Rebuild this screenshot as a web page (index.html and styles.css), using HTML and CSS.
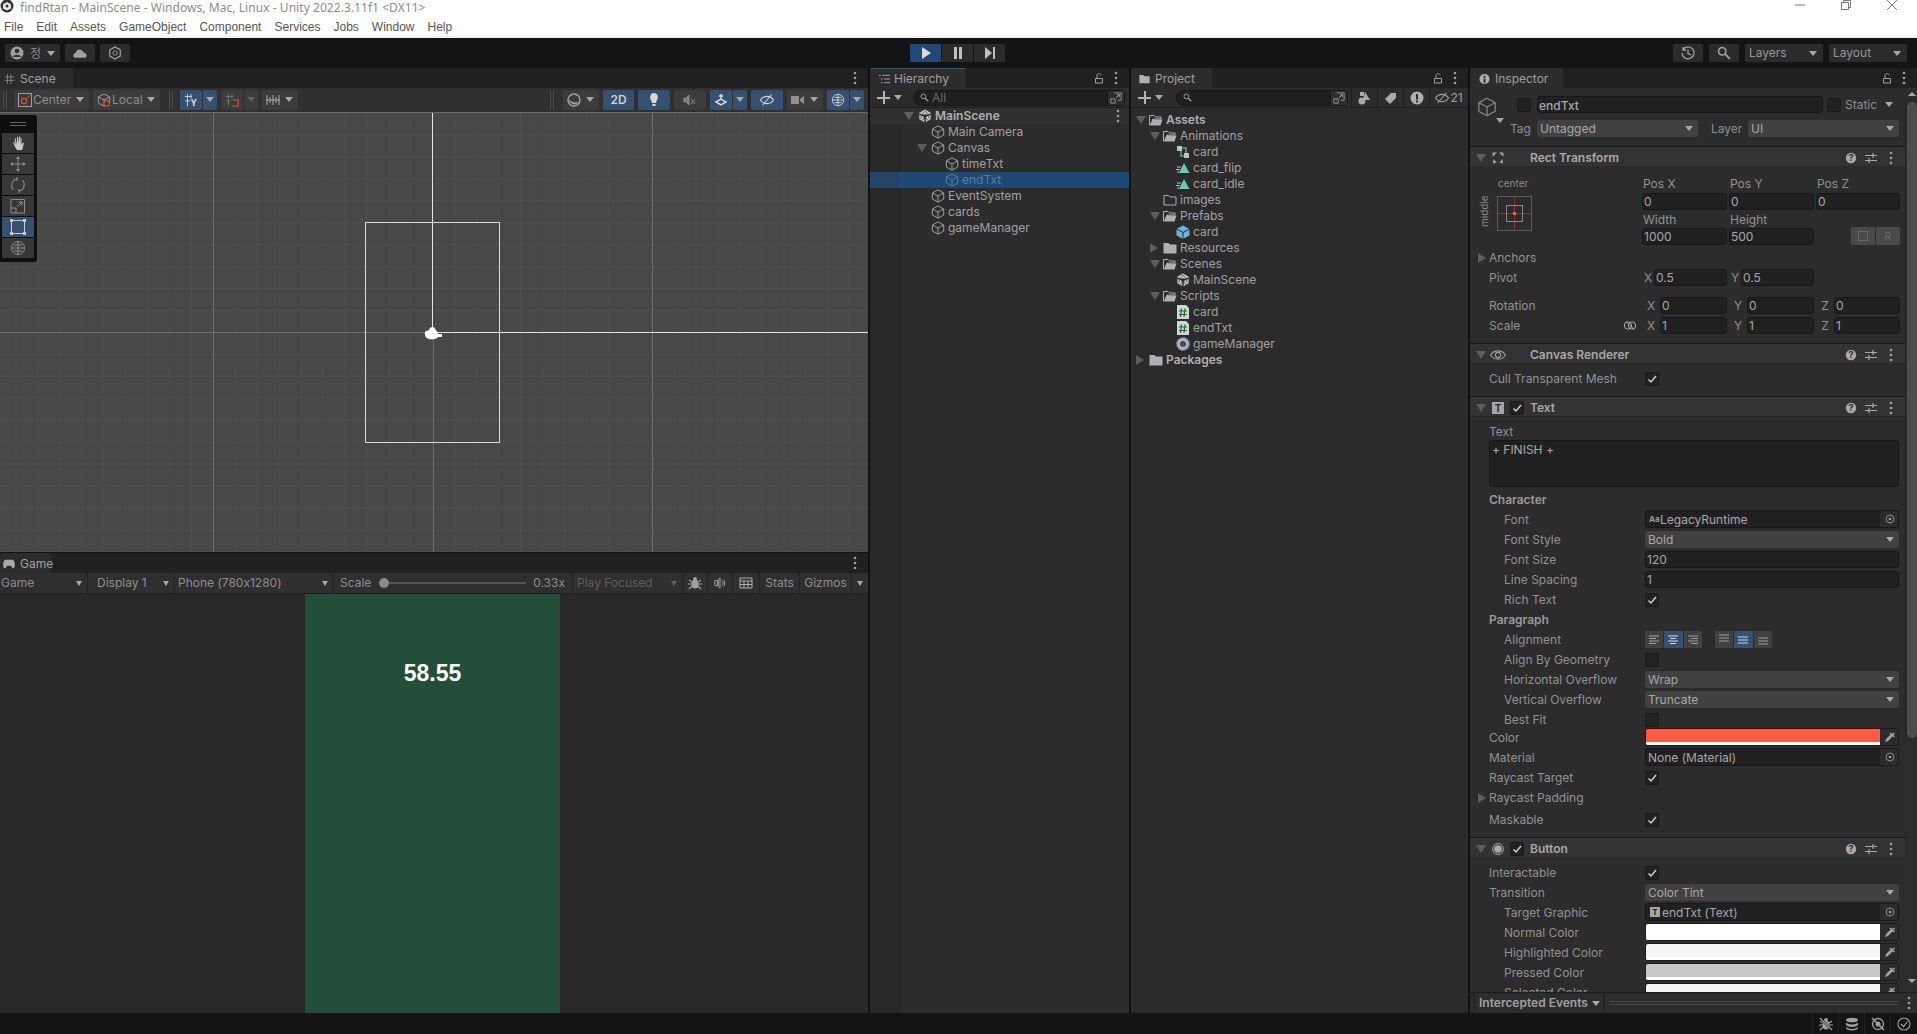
FILE: index.html
```html
<!DOCTYPE html>
<html lang="en">
<head>
<meta charset="utf-8">
<title>findRtan - MainScene - Unity</title>
<link rel="stylesheet" href="styles.css">
</head>
<body>
<svg class="defs" width="0" height="0">
<defs>
<symbol id="cube" viewBox="0 0 16 16"><path d="M8 1 14.5 4.5V11.5L8 15 1.5 11.5V4.5ZM1.5 4.5 8 8 14.5 4.5M8 8V15" fill="none" stroke="currentColor" stroke-width="1.1"/></symbol>
<symbol id="unity" viewBox="0 0 16 16"><path d="M8 .5 14.5 4.200V11.800L8 15.500 1.500 11.800V4.200Z" fill="#c8c8c8"/><path d="M8 8 1.500 6M8 8 14.500 6M8 8 8 15.500" stroke="#2a2a2a" stroke-width="1.700" fill="none"/><path d="M8 2.500 5 5.500M8 2.500 11 5.500M3 11 4.500 7.500M13 11 11.500 7.500M5 13 7 10M11 13 9 10" stroke="#2a2a2a" stroke-width=".8" fill="none"/><circle cx="8" cy="8" r="2" fill="#2a2a2a"/></symbol>
<symbol id="dots" viewBox="0 0 4 14"><circle cx="2" cy="2" r="1.3" fill="currentColor"/><circle cx="2" cy="7" r="1.3" fill="currentColor"/><circle cx="2" cy="12" r="1.3" fill="currentColor"/></symbol>
<symbol id="lock" viewBox="0 0 10 12"><path d="M1.5 6.5H8.5V11H1.5ZM3 6V3.2C3 1.2 7 1.2 7 3.2" fill="none" stroke="currentColor" stroke-width="1"/></symbol>
<symbol id="help" viewBox="0 0 12 12"><circle cx="6" cy="6" r="5.2" fill="currentColor"/><text x="6" y="9.3" text-anchor="middle" font-size="9" font-weight="700" font-family="Inter" fill="#2c2c2c">?</text></symbol>
<symbol id="sliders" viewBox="0 0 12 12"><path d="M0 3.5H12M0 8.5H12M8 1V6M4 6V11" stroke="currentColor" stroke-width="1.2" fill="none"/></symbol>
<symbol id="check" viewBox="0 0 12 12"><path d="M2.5 6.5 5 9 10 3" stroke="#d0d0d0" stroke-width="1.5" fill="none"/></symbol>
<symbol id="pick" viewBox="0 0 12 12"><path d="M1 11 2 8 7 3 9 5 4 10ZM7 1.5 8.5 3 10 1.5 11 2.5 9.5 4 11 5.5 10 6.5 5.5 2.5Z" fill="currentColor"/></symbol>
<symbol id="target" viewBox="0 0 12 12"><circle cx="6" cy="6" r="4.7" fill="none" stroke="currentColor"/><circle cx="6" cy="6" r="1.6" fill="currentColor"/></symbol>
<symbol id="fold-o" viewBox="0 0 14 12"><path d="M.5 1.5H5L6.5 3H12V5H4L1.5 11H.5Z" fill="none" stroke="#b0b0b0"/><path d="M3.5 5.5H13.5L11.5 11.5H1.5Z" fill="#b0b0b0"/></symbol>
<symbol id="fold-c" viewBox="0 0 14 12"><path d="M.5 1H5.5L7 2.5H13.5V11.5H.5Z" fill="#b0b0b0"/></symbol>
<symbol id="fold-e" viewBox="0 0 14 12"><path d="M1 1.5H5.5L7 3H13V11H1Z" fill="none" stroke="#b0b0b0"/></symbol>
<symbol id="ctrl" viewBox="0 0 14 14"><rect x="1" y="1" width="5" height="5" fill="#c0c0c0"/><rect x="8" y="8" width="5" height="5" fill="#c0c0c0"/><path d="M5 6V11H8M6 3H10V8" fill="none" stroke="#5fd0b8" stroke-width="1.2"/></symbol>
<symbol id="clip" viewBox="0 0 14 14"><path d="M8 2 13.5 12H3Z" fill="#5fd0b8"/><path d="M1 6H5M0 8.5H4M1 11H3" stroke="#c0c0c0"/></symbol>
<symbol id="prefab" viewBox="0 0 14 14"><path d="M7 .5 13.5 4V10.5L7 14 .5 10.5V4Z" fill="#6db3dc"/><path d="M.5 4 7 7.5 13.5 4M7 7.5V14" stroke="#2c2c2c" fill="none"/></symbol>
<symbol id="script" viewBox="0 0 14 14"><path d="M1 0H10L13 3V14H1Z" fill="#d4d4d4"/><path d="M5.5 3.5 4.5 12M9 3.5 8 12M3 6H11M3 9.5H11" stroke="#1f6b2d" stroke-width="1.2" fill="none"/></symbol>
<symbol id="gear" viewBox="0 0 14 14"><circle cx="7" cy="7" r="4.600" fill="none" stroke="#a9b4c4" stroke-width="3.600"/><circle cx="7" cy="7" r="6.200" fill="none" stroke="#7c8594" stroke-width="1.500" stroke-dasharray="1.600 1.600"/><circle cx="7" cy="7" r="2" fill="#4a5260"/></symbol>
<symbol id="rect" viewBox="0 0 14 14"><path d="M1 1 5 1 1 5ZM13 1 9 1 13 5ZM2 9 5 12 1.500 13ZM12 9 9 12 12.500 13Z" fill="currentColor" stroke="currentColor" stroke-width=".8"/></symbol>
<symbol id="eye" viewBox="0 0 16 12"><path d="M.5 6C4 .5 12 .5 15.5 6 12 11.500 4 11.500 .5 6Z" fill="none" stroke="currentColor" stroke-width="1.1"/><circle cx="8" cy="6" r="2.6" fill="none" stroke="currentColor" stroke-width="1.1"/></symbol>
<symbol id="eyeoff" viewBox="0 0 16 14"><path d="M.5 7C4 1.500 12 1.500 15.500 7 12 12.500 4 12.500 .5 7ZM3 13 13 1" fill="none" stroke="currentColor" stroke-width="1.2"/></symbol>
<symbol id="pop" viewBox="0 0 14 14"><path d="M4.500 1H13V9.500H9M1 8H6V13H1ZM7 7 11 3M8 3H11V6" fill="none" stroke="currentColor"/></symbol>
<symbol id="mag" viewBox="0 0 12 12"><circle cx="4.500" cy="4.500" r="3.200" fill="none" stroke="currentColor" stroke-width="1.300"/><path d="M7 7 11 11" stroke="currentColor" stroke-width="1.600"/></symbol>
<symbol id="bug" viewBox="0 0 14 14"><ellipse cx="7" cy="8" rx="3.500" ry="4.500" fill="currentColor"/><circle cx="7" cy="3" r="2" fill="currentColor"/><path d="M1 4 4 6M13 4 10 6M0 8H4M14 8H10M1 13 4 10M13 13 10 10" stroke="currentColor" stroke-width="1.200"/></symbol>
<symbol id="bugoff" viewBox="0 0 14 14"><use href="#bug" width="14" height="14"/><path d="M1 1 13 13" stroke="#141414" stroke-width="2.400"/><path d="M1 1 13 13" stroke="currentColor" stroke-width="1.200"/></symbol>
<symbol id="db" viewBox="0 0 14 14"><ellipse cx="7" cy="3" rx="6" ry="2.300" fill="currentColor"/><path d="M1 5.500C3 8 11 8 13 5.500V8C11 10.500 3 10.500 1 8ZM1 10C3 12.500 11 12.500 13 10V11.500C11 14 3 14 1 11.500Z" fill="currentColor"/></symbol>
<symbol id="tgtoff" viewBox="0 0 14 14"><circle cx="7" cy="7" r="5.500" fill="none" stroke="currentColor" stroke-width="1.300"/><circle cx="7" cy="7" r="2.500" fill="currentColor"/><path d="M1 1 13 13" stroke="currentColor" stroke-width="1.600"/></symbol>
<symbol id="okc" viewBox="0 0 14 14"><circle cx="7" cy="7" r="6" fill="none" stroke="currentColor" stroke-width="1.100"/><path d="M4 7 6.500 9.500 10.500 4.500" fill="none" stroke="currentColor" stroke-width="1.200"/></symbol>
<symbol id="hand" viewBox="0 0 16 16"><path d="M3 7 5 12 7 15H12L14 8 12.500 8 11.500 10V3L10.500 3 10 9V1.500H9L8.500 9 8 1.500 7 2 7 9.500 5.500 3 4.700 3.500 5.500 10 4 7Z" fill="currentColor"/></symbol>
<symbol id="move" viewBox="0 0 16 16"><path d="M8 3V13M3 8H13" stroke="currentColor"/><path d="M8 0 10 3H6ZM8 16 6 13H10ZM0 8 3 6V10ZM16 8 13 10V6Z" fill="currentColor"/></symbol>
<symbol id="rot" viewBox="0 0 16 16"><path d="M3.500 13C0 9 2 3 7 2M12.500 3C16 7 14 13 9 14M7 0V4M9 12V16" fill="none" stroke="currentColor" stroke-width="1.100"/></symbol>
<symbol id="scale" viewBox="0 0 16 16"><path d="M1 1.500H14.500V15H1ZM1 10H6V15M7.500 8.500 12 4M8.500 4H12V7.500" fill="none" stroke="currentColor"/></symbol>
<symbol id="rt" viewBox="0 0 16 16"><path d="M3 1.500H13M3 14.500H13M1.500 3V13M14.500 3V13" stroke="currentColor" fill="none"/><path d="M0 0H3V3H0ZM13 0H16V3H13ZM0 13H3V16H0ZM13 13H16V16H13Z" fill="currentColor"/></symbol>
<symbol id="xf" viewBox="0 0 16 16"><circle cx="8" cy="8" r="6.500" fill="none" stroke="currentColor"/><path d="M8 2V14M2 8H14M4 5H12M4 11H12" stroke="currentColor" fill="none"/></symbol>
<symbol id="ac" viewBox="0 0 14 14"><circle cx="7" cy="7" r="6.500" fill="currentColor"/><circle cx="7" cy="5" r="2.300" fill="#2e2e2e"/><path d="M2.800 11C4 8 10 8 11.200 11" fill="#2e2e2e"/></symbol>
<symbol id="cloud" viewBox="0 0 16 12"><path d="M3 11.500C-.5 11.500 -.5 6 3 6 3.500 1 11 .5 12 5.500 16.500 5.500 16.500 11.500 13 11.500Z" fill="currentColor"/></symbol>
<symbol id="hex" viewBox="0 0 14 16"><path d="M7 1 13 4.500V11.500L7 15 1 11.500V4.500Z" fill="none" stroke="currentColor" stroke-width="1.400"/><circle cx="7" cy="8" r="2.500" fill="none" stroke="currentColor"/></symbol>
<symbol id="hist" viewBox="0 0 14 14"><path d="M2 3.500A6 6 0 1 1 1 7M2 1V4H5M7 3.500V7.500L10 9" fill="none" stroke="currentColor" stroke-width="1.300"/></symbol>
<symbol id="grid" viewBox="0 0 16 16"><path d="M5 1V15M10 1V15M1 5H15M1 10H15" stroke="currentColor" fill="none"/></symbol>
<symbol id="lines3" viewBox="0 0 12 12"><path d="M1 3H11M1 6H11M1 9H11" stroke="currentColor" stroke-width="1"/></symbol>
</defs>
</svg>

<header class="titlebar">
  <div class="title-row">
    <svg class="app-logo" viewBox="0 0 14 14"><circle cx="7" cy="6" r="6.500" fill="#333"/><path d="M7 2 11 4.200V8.500L7 10.500 3 8.500V4.200Z" fill="#e8e8e8"/><circle cx="7" cy="6" r="1.500" fill="#333"/></svg>
    <span class="app-title">findRtan - MainScene - Windows, Mac, Linux - Unity 2022.3.11f1 &lt;DX11&gt;</span>
    <span class="winctl">
      <svg class="win-ic" viewBox="0 0 10 10"><path d="M0 5H10" stroke="#777"/></svg>
      <svg class="win-ic" viewBox="0 0 10 10"><path d="M.5 2.500H7.500V9.500H.5ZM2.500 2.500V.5H9.500V7.500H7.500" fill="none" stroke="#777"/></svg>
      <svg class="win-ic" viewBox="0 0 10 10"><path d="M0 0 10 10M10 0 0 10" stroke="#777"/></svg>
    </span>
  </div>
  <nav class="menu"><span>File</span><span>Edit</span><span>Assets</span><span>GameObject</span><span>Component</span><span>Services</span><span>Jobs</span><span>Window</span><span>Help</span></nav>
</header>

<div class="toolbar">
  <div class="tb-left">
    <span class="tbtn acc"><svg class="ic14"><use href="#ac"/></svg><span class="kr">정</span><i class="ad"></i></span>
    <span class="tbtn w30"><svg class="ic14"><use href="#cloud"/></svg></span>
    <span class="tbtn w30"><svg class="ic14"><use href="#hex"/></svg></span>
  </div>
  <div class="tb-play">
    <span class="pbtn on"><svg class="ic10" viewBox="0 0 10 12"><path d="M1 0 10 6 1 12Z" fill="#d8d8d8"/></svg></span>
    <span class="pbtn"><svg class="ic10" viewBox="0 0 10 12"><path d="M1 0H4V12H1ZM6 0H9V12H6Z" fill="#c0c0c0"/></svg></span>
    <span class="pbtn"><svg class="ic10" viewBox="0 0 10 12"><path d="M0 0 7 6 0 12ZM8 0H10V12H8Z" fill="#c0c0c0"/></svg></span>
  </div>
  <div class="tb-right">
    <span class="tbtn w30"><svg class="ic14"><use href="#hist"/></svg></span>
    <span class="tbtn w30"><svg class="ic14"><use href="#mag"/></svg></span>
    <span class="tbtn w78"><span>Layers</span><i class="ad"></i></span>
    <span class="tbtn w78"><span>Layout</span><i class="ad"></i></span>
  </div>
</div>

<main class="main">
  <!-- Scene + Game -->
  <section class="col-left">
    <div class="pane-scene">
      <div class="tabbar"><span class="tab tab-scene"><svg class="ic10 tabic"><use href="#grid"/></svg>Scene</span><svg class="tdots"><use href="#dots"/></svg></div>
      <div class="scene-tools">
        <span class="grip"></span>
        <span class="stb w75"><svg class="ic14" viewBox="0 0 14 14"><rect x=".5" y=".5" width="13" height="13" fill="none" stroke="#a0a0a0"/><circle cx="6" cy="8" r="2.700" fill="none" stroke="#d0532c" stroke-width="1.300"/><path d="M8 6 12 2" stroke="#d0532c"/></svg>Center<i class="ad"></i></span>
        <span class="stb w67"><svg class="ic14" viewBox="0 0 16 16"><use href="#cube" width="16" height="16"/><circle cx="11" cy="12" r="3" fill="#333" stroke="#d0532c" stroke-width="1.300"/></svg>Local<i class="ad"></i></span>
        <span class="grip g2"></span>
        <span class="stb blue w22"><svg class="ic14" viewBox="0 0 16 16"><path d="M1 4H9M1 9H7M4 1V15M8 1V6" stroke="#d8d8d8" fill="none"/><text x="11" y="15" text-anchor="middle" font-size="10" font-weight="700" font-family="Inter" fill="#e0e0e0">Y</text></svg></span><span class="stb blue w14 join"><i class="ad"></i></span>
        <span class="stb w22"><svg class="ic14" viewBox="0 0 16 16"><path d="M1 4H9M1 9H6M4 1V15M8 1V6" stroke="#777" fill="none"/><path d="M9 8H15V11A3 3 0 0 1 9 14" fill="none" stroke="#b5502a" stroke-width="1.800"/></svg></span><span class="stb w14 join"><i class="ad dimad"></i></span>
        <span class="stb w36"><svg class="ic14"><path d="M1 2V12M4 4V10M7 2V12M10 4V10M13 2V12M0 7H14" stroke="#aaa" fill="none"/></svg><i class="ad"></i></span>
        <span class="spacer"></span>
        <span class="grip g3"></span>
        <span class="stb w36"><svg class="ic14"><circle cx="7" cy="7" r="6" fill="none" stroke="#a0a0a0" stroke-width="1.500"/><path d="M1.500 6C3 12 9 13 12.500 9 8 10 4 9 1.500 6Z" fill="#a0a0a0"/></svg><i class="ad"></i></span>
        <span class="stb blue w31 ctr strong">2D</span>
        <span class="stb blue w32 ctr"><svg class="ic14" viewBox="0 0 14 14"><path d="M7 0C11 0 12 5 9.500 8L9 10H5L4.500 8C2 5 3 0 7 0ZM5.500 11H8.500V13H5.500Z" fill="#d8d8d8"/></svg></span>
        <span class="stb w32 ctr"><svg class="ic14 dim" viewBox="0 0 14 14"><path d="M1 5H3V9H1ZM4 4 6 2V12L4 10ZM8 6 12 11M12 6 8 11" stroke="#888" fill="#888"/></svg></span>
        <span class="stb blue w22"><svg class="ic14"><path d="M2 9 7 6 12 9 7 12ZM7 1V6M5 3H9" stroke="#d8d8d8" fill="none" stroke-width="1.500"/></svg></span><span class="stb blue w14 join"><i class="ad"></i></span>
        <span class="stb blue w32 ctr"><svg class="ic14"><use href="#eyeoff"/></svg></span>
        <span class="stb w36"><svg class="ic14" viewBox="0 0 14 14"><path d="M0 3H8V11H0ZM9 6 13 3V11L9 8Z" fill="#909090"/></svg><i class="ad"></i></span>
        <span class="stb blue w22"><svg class="ic14"><use href="#xf"/></svg></span><span class="stb blue w14 join"><i class="ad"></i></span>
      </div>
      <div class="scene-view">
        <div class="mark v-a"></div><div class="mark v-b"></div><div class="mark v-c"></div>
        <div class="mark h-a"></div>
        <div class="wline v-w"></div><div class="wline h-w"></div>
        <div class="canvas-rect"></div>
        <svg class="cam" viewBox="0 0 18 14"><path d="M1 8C0 5.500 3 4 5 4.500 5.500 0 11.500 0 11.500 4 13 5 13.500 6 14 8H18V11H14C13 13.500 5 14 4 12.500 2 12.500 1 10 1 8Z" fill="#fff"/></svg>
        <div class="palette">
          <div class="pal-head"><span></span></div>
          <span class="pal-b"><svg class="ic16 br"><use href="#hand"/></svg></span>
          <span class="pal-b"><svg class="ic16"><use href="#move"/></svg></span>
          <span class="pal-b"><svg class="ic16"><use href="#rot"/></svg></span>
          <span class="pal-b"><svg class="ic16"><use href="#scale"/></svg></span>
          <span class="pal-b on"><svg class="ic16 br"><use href="#rt"/></svg></span>
          <span class="pal-b"><svg class="ic16"><use href="#xf"/></svg></span>
        </div>
      </div>
    </div>
    <div class="pane-game">
      <div class="tabbar"><span class="tab tab-game"><svg class="ic12 tabic" viewBox="0 0 14 10"><path d="M3 0H11C14 0 15 9 12 10 10 10 10 7 9 7H5C4 7 4 10 2 10-1 9 0 0 3 0Z" fill="#aaa"/></svg>Game</span><svg class="tdots"><use href="#dots"/></svg></div>
      <div class="game-tools">
        <span class="gt s88">Game<i class="ad sm"></i></span>
        <span class="gt s85 pl">Display 1<i class="ad sm"></i></span>
        <span class="gt s161">Phone (780x1280)<i class="ad sm"></i></span>
        <span class="gt s239 sc">Scale<span class="slider"><i></i></span><span>0.33x</span></span>
        <span class="gt s110 off">Play Focused<i class="ad sm dimad"></i></span>
        <span class="gt s25 ctr"><svg class="ic14"><use href="#bug"/></svg></span>
        <span class="gt s25 ctr"><svg class="ic12" viewBox="0 0 14 14"><path d="M1 4H4V10H1ZM5 3 7 1V13L5 11ZM9 4C11 5 11 9 9 10M11 3C13 5 13 9 11 11" stroke="#b0b0b0" fill="none"/></svg></span>
        <span class="gt s27 ctr"><svg class="ic14" viewBox="0 0 14 14"><path d="M1 2H13V12H1ZM1 5H13M1 8.500H13M5 5V12M9 5V12" fill="none" stroke="#b0b0b0"/></svg></span>
        <span class="gt s40 ctr">Stats</span>
        <span class="gt s52 ctr">Gizmos</span>
        <span class="gt s16 ctr"><i class="ad sm"></i></span>
      </div>
      <div class="game-view"><div class="phone"><span class="timer">58.55</span></div></div>
    </div>
  </section>

  <!-- Hierarchy -->
  <section class="col-hier">
    <div class="tabbar"><span class="tab tab-hier"><svg class="ic12 tabic" viewBox="0 0 12 12"><path d="M0 2H2M3.500 2H12M2 6H4M5.500 6H12M2 10H4M5.500 10H12" stroke="#a8a8a8"/></svg>Hierarchy</span><svg class="tlock"><use href="#lock"/></svg><svg class="tdots"><use href="#dots"/></svg></div>
    <div class="pane-tools">
      <span class="plus"></span><i class="ad"></i>
      <span class="search s-hier"><svg class="ic10"><use href="#mag"/></svg><span class="all">All</span><span class="pop"><svg class="ic12"><use href="#pop"/></svg></span></span>
    </div>
    <div class="tree hier">
      <div class="node l0 head"><i class="ar"></i><svg class="ic14 nic"><use href="#unity"/></svg><b>MainScene</b><svg class="tdots rowdots"><use href="#dots"/></svg></div>
      <div class="node l1"><i class="ar none"></i><svg class="ic14 nic"><use href="#cube"/></svg>Main Camera</div>
      <div class="node l1"><i class="ar"></i><svg class="ic14 nic"><use href="#cube"/></svg>Canvas</div>
      <div class="node l2"><i class="ar none"></i><svg class="ic14 nic"><use href="#cube"/></svg>timeTxt</div>
      <div class="node l2 sel"><i class="ar none"></i><svg class="ic14 nic"><use href="#cube"/></svg>endTxt</div>
      <div class="node l1"><i class="ar none"></i><svg class="ic14 nic"><use href="#cube"/></svg>EventSystem</div>
      <div class="node l1"><i class="ar none"></i><svg class="ic14 nic"><use href="#cube"/></svg>cards</div>
      <div class="node l1"><i class="ar none"></i><svg class="ic14 nic"><use href="#cube"/></svg>gameManager</div>
    </div>
  </section>

  <!-- Project -->
  <section class="col-proj">
    <div class="tabbar"><span class="tab tab-proj"><svg class="ic12 tabic"><use href="#fold-c"/></svg>Project</span><svg class="tlock"><use href="#lock"/></svg><svg class="tdots"><use href="#dots"/></svg></div>
    <div class="pane-tools proj-tools">
      <span class="plus"></span><i class="ad"></i>
      <span class="search s-proj"><svg class="ic10"><use href="#mag"/></svg><span class="pop"><svg class="ic12"><use href="#pop"/></svg></span></span>
      <span class="pt-b"><svg class="ic14" viewBox="0 0 14 14"><circle cx="4" cy="10" r="3.500" fill="#aaa"/><path d="M7 1 12 9H5Z M2 1H6V5H2Z" fill="#aaa"/></svg></span>
      <span class="pt-b"><svg class="ic12" viewBox="0 0 12 12"><path d="M6 1H11V6L5 12 0 7Z" fill="#aaa"/></svg></span>
      <span class="pt-b"><svg class="ic14" viewBox="0 0 14 14"><circle cx="7" cy="7" r="6.500" fill="#b0b0b0"/><path d="M6 3H8V8.500H6ZM6 9.500H8V11.500H6Z" fill="#2c2c2c"/></svg></span>
      <span class="pt-b last"><svg class="ic14"><use href="#eyeoff"/></svg>21</span>
    </div>
    <div class="tree proj">
      <div class="node l0"><i class="ar"></i><svg class="ic14 nic"><use href="#fold-o"/></svg><b>Assets</b></div>
      <div class="node l1"><i class="ar"></i><svg class="ic14 nic"><use href="#fold-o"/></svg>Animations</div>
      <div class="node l2"><i class="ar none"></i><svg class="ic14 nic"><use href="#ctrl"/></svg>card</div>
      <div class="node l2"><i class="ar none"></i><svg class="ic14 nic"><use href="#clip"/></svg>card_flip</div>
      <div class="node l2"><i class="ar none"></i><svg class="ic14 nic"><use href="#clip"/></svg>card_idle</div>
      <div class="node l1"><i class="ar none"></i><svg class="ic14 nic"><use href="#fold-e"/></svg>images</div>
      <div class="node l1"><i class="ar"></i><svg class="ic14 nic"><use href="#fold-o"/></svg>Prefabs</div>
      <div class="node l2"><i class="ar none"></i><svg class="ic14 nic"><use href="#prefab"/></svg>card</div>
      <div class="node l1"><i class="ar r"></i><svg class="ic14 nic"><use href="#fold-c"/></svg>Resources</div>
      <div class="node l1"><i class="ar"></i><svg class="ic14 nic"><use href="#fold-o"/></svg>Scenes</div>
      <div class="node l2"><i class="ar none"></i><svg class="ic14 nic"><use href="#unity"/></svg>MainScene</div>
      <div class="node l1"><i class="ar"></i><svg class="ic14 nic"><use href="#fold-o"/></svg>Scripts</div>
      <div class="node l2"><i class="ar none"></i><svg class="ic14 nic"><use href="#script"/></svg>card</div>
      <div class="node l2"><i class="ar none"></i><svg class="ic14 nic"><use href="#script"/></svg>endTxt</div>
      <div class="node l2"><i class="ar none"></i><svg class="ic14 nic"><use href="#gear"/></svg>gameManager</div>
      <div class="node l0"><i class="ar r"></i><svg class="ic14 nic"><use href="#fold-c"/></svg><b>Packages</b></div>
    </div>
  </section>

  <!-- Inspector -->
  <section class="col-insp">
    <div class="tabbar"><span class="tab tab-insp"><svg class="ic10 tabic" viewBox="0 0 12 12"><circle cx="6" cy="6" r="5.500" fill="#b0b0b0"/><path d="M5 2.500H7V4.500H5ZM5 5.500H7V10H5Z" fill="#222"/></svg>Inspector</span><svg class="tlock"><use href="#lock"/></svg><svg class="tdots"><use href="#dots"/></svg></div>
    <div class="insp-scroll">
      <div class="insp-body">
        <div class="obj-head">
          <svg class="obj-cube"><use href="#cube"/></svg><i class="ad obj-ad"></i>
          <div class="obj-rows">
            <div class="obj-r1"><span class="cb"></span><span class="fld name">endTxt</span><span class="cb"></span><span class="static">Static</span><i class="ad"></i></div>
            <div class="obj-r2"><span class="tl">Tag</span><span class="dd dd-tag">Untagged<i class="ad"></i></span><span class="tl tl2">Layer</span><span class="dd dd-layer">UI<i class="ad"></i></span></div>
          </div>
        </div>

        <div class="comp">
          <div class="chead"><i class="ar"></i><svg class="ic12 cic"><use href="#rect"/></svg><span class="cnb"></span><b>Rect Transform</b><svg class="ic12 hic"><use href="#help"/></svg><svg class="ic12 hic"><use href="#sliders"/></svg><svg class="tdots hd"><use href="#dots"/></svg></div>
          <div class="rt-body">
            <div class="rt-top">
              <div class="anchor">
                <span class="a-center">center</span>
                <span class="a-middle">middle</span>
                <div class="a-box"><i class="a-h"></i><i class="a-v"></i><i class="a-in"></i><i class="a-dot"></i></div>
              </div>
              <div class="rt-grid">
                <span>Pos X</span><span>Pos Y</span><span>Pos Z</span>
                <span class="fld">0</span><span class="fld">0</span><span class="fld">0</span>
                <span>Width</span><span>Height</span><span></span>
                <span class="fld">1000</span><span class="fld">500</span>
                <span class="rbtns"><span class="rb"><i class="dash"></i></span><span class="rb">R</span></span>
              </div>
            </div>
            <div class="row foldrow"><i class="ar r"></i><span class="lbl">Anchors</span></div>
            <div class="row rtr"><span class="lbl rtl">Pivot</span><div class="tri">
              <span class="ax pv"><em>X</em><span class="fld">0.5</span></span><span class="ax pv"><em>Y</em><span class="fld">0.5</span></span><span></span></div></div>
            <div class="row rtr rot"><span class="lbl rtl">Rotation</span><div class="tri">
              <span class="ax"><em>X</em><span class="fld">0</span></span><span class="ax"><em>Y</em><span class="fld">0</span></span><span class="ax"><em>Z</em><span class="fld">0</span></span></div></div>
            <div class="row rtr"><span class="lbl rtl lk">Scale<svg class="ic12 link" viewBox="0 0 12 8"><rect x=".5" y=".5" width="7" height="7" rx="3" fill="none" stroke="#aaa"/><rect x="4.500" y=".5" width="7" height="7" rx="3" fill="none" stroke="#aaa"/><path d="M2 0 10 8" stroke="#aaa"/></svg></span><div class="tri">
              <span class="ax"><em>X</em><span class="fld">1</span></span><span class="ax"><em>Y</em><span class="fld">1</span></span><span class="ax"><em>Z</em><span class="fld">1</span></span></div></div>
          </div>
        </div>

        <div class="comp">
          <div class="chead"><i class="ar"></i><svg class="ic16 cic eye"><use href="#eye"/></svg><span class="cnb"></span><b>Canvas Renderer</b><svg class="ic12 hic"><use href="#help"/></svg><svg class="ic12 hic"><use href="#sliders"/></svg><svg class="tdots hd"><use href="#dots"/></svg></div>
          <div class="cbody"><div class="row"><span class="lbl">Cull Transparent Mesh</span><span class="cb"><svg><use href="#check"/></svg></span></div></div>
        </div>

        <div class="comp">
          <div class="chead"><i class="ar"></i><span class="cic t-ic">T</span><span class="cb hcb"><svg><use href="#check"/></svg></span><b>Text</b><svg class="ic12 hic"><use href="#help"/></svg><svg class="ic12 hic"><use href="#sliders"/></svg><svg class="tdots hd"><use href="#dots"/></svg></div>
          <div class="cbody tbody">
            <div class="tlabel">Text</div>
            <div class="tarea">+ FINISH +</div>
            <div class="row group"><b>Character</b></div>
            <div class="row"><span class="lbl ind">Font</span><span class="obj"><span class="aa">Aa</span>LegacyRuntime<span class="obt"><svg class="ic10"><use href="#target"/></svg></span></span></div>
            <div class="row"><span class="lbl ind">Font Style</span><span class="dd">Bold<i class="ad"></i></span></div>
            <div class="row"><span class="lbl ind">Font Size</span><span class="fld">120</span></div>
            <div class="row"><span class="lbl ind">Line Spacing</span><span class="fld">1</span></div>
            <div class="row"><span class="lbl ind">Rich Text</span><span class="cb"><svg><use href="#check"/></svg></span></div>
            <div class="row group"><b>Paragraph</b></div>
            <div class="row"><span class="lbl ind">Alignment</span>
              <span class="seg"><span><svg class="ic12" viewBox="0 0 12 12"><path d="M1 2H11M1 4.500H8M1 7H11M1 9.500H8" stroke="currentColor"/></svg></span><span class="on"><svg class="ic12" viewBox="0 0 12 12"><path d="M1 2H11M3 4.500H9M1 7H11M3 9.500H9" stroke="currentColor"/></svg></span><span><svg class="ic12" viewBox="0 0 12 12"><path d="M1 2H11M4 4.500H11M1 7H11M4 9.500H11" stroke="currentColor"/></svg></span></span>
              <span class="seg seg2"><span class="up"><svg class="ic12"><use href="#lines3"/></svg></span><span class="on"><svg class="ic12"><use href="#lines3"/></svg></span><span class="down"><svg class="ic12"><use href="#lines3"/></svg></span></span>
            </div>
            <div class="row"><span class="lbl ind">Align By Geometry</span><span class="cb"></span></div>
            <div class="row"><span class="lbl ind">Horizontal Overflow</span><span class="dd">Wrap<i class="ad"></i></span></div>
            <div class="row"><span class="lbl ind">Vertical Overflow</span><span class="dd">Truncate<i class="ad"></i></span></div>
            <div class="row short"><span class="lbl ind">Best Fit</span><span class="cb"></span></div>
            <div class="row"><span class="lbl">Color</span><span class="color"><span class="sw c-red"></span><span class="obt"><svg class="ic12"><use href="#pick"/></svg></span></span></div>
            <div class="row"><span class="lbl">Material</span><span class="obj">None (Material)<span class="obt"><svg class="ic10"><use href="#target"/></svg></span></span></div>
            <div class="row"><span class="lbl">Raycast Target</span><span class="cb"><svg><use href="#check"/></svg></span></div>
            <div class="row foldrow"><i class="ar r"></i><span class="lbl">Raycast Padding</span></div>
            <div class="row mask"><span class="lbl">Maskable</span><span class="cb"><svg><use href="#check"/></svg></span></div>
          </div>
        </div>

        <div class="comp">
          <div class="chead"><i class="ar"></i><svg class="ic12 cic radio" viewBox="0 0 12 12"><circle cx="6" cy="6" r="5.400" fill="none" stroke="#aaa"/><circle cx="6" cy="6" r="3.800" fill="#aaa"/></svg><span class="cb hcb"><svg><use href="#check"/></svg></span><b>Button</b><svg class="ic12 hic"><use href="#help"/></svg><svg class="ic12 hic"><use href="#sliders"/></svg><svg class="tdots hd"><use href="#dots"/></svg></div>
          <div class="cbody">
            <div class="row"><span class="lbl">Interactable</span><span class="cb"><svg><use href="#check"/></svg></span></div>
            <div class="row"><span class="lbl">Transition</span><span class="dd">Color Tint<i class="ad"></i></span></div>
            <div class="row"><span class="lbl ind">Target Graphic</span><span class="obj"><span class="tmini">T</span>endTxt (Text)<span class="obt"><svg class="ic10"><use href="#target"/></svg></span></span></div>
            <div class="row"><span class="lbl ind">Normal Color</span><span class="color"><span class="sw c-white"></span><span class="obt"><svg class="ic12"><use href="#pick"/></svg></span></span></div>
            <div class="row"><span class="lbl ind">Highlighted Color</span><span class="color"><span class="sw c-hi"></span><span class="obt"><svg class="ic12"><use href="#pick"/></svg></span></span></div>
            <div class="row"><span class="lbl ind">Pressed Color</span><span class="color"><span class="sw c-pr"></span><span class="obt"><svg class="ic12"><use href="#pick"/></svg></span></span></div>
            <div class="row"><span class="lbl ind">Selected Color</span><span class="color"><span class="sw c-hi"></span><span class="obt"><svg class="ic12"><use href="#pick"/></svg></span></span></div>
          </div>
        </div>
      </div>
      <div class="vscroll"><i class="sb-up"></i><span class="thumb"></span><i class="sb-down"></i></div>
    </div>
    <div class="events"><span class="ev-name">Intercepted Events<i class="ad"></i></span><span class="ev-lines"></span><svg class="tdots"><use href="#dots"/></svg></div>
  </section>
</main>

<footer class="status">
  <span><svg class="ic14"><use href="#bugoff"/></svg></span>
  <span><svg class="ic14"><use href="#db"/></svg></span>
  <span><svg class="ic14"><use href="#tgtoff"/></svg></span>
  <span><svg class="ic14"><use href="#okc"/></svg></span>
</footer>
</body>
</html>
```
FILE: styles.css
```css
* { box-sizing: border-box; }
html, body { margin: 0; padding: 0; }
body { width: 1917px; height: 1034px; overflow: hidden; display: flex; flex-direction: column; background: #101010; font: 12px/16px Inter, "Noto Sans CJK KR", sans-serif; font-feature-settings: "calt" 0; color: #a6a6a6; }
svg { display: block; flex: none; }
.defs { position: absolute; }
i { display: block; font-style: normal; }
em { font-style: normal; }
b { font-weight: 600; }

/* window chrome */
.titlebar { height: 38px; flex: none; background: #fff; border-bottom: 2px solid #f0f0f0; font-family: "Noto Sans", sans-serif; color: #8a8a8a; }
.title-row { height: 19px; display: flex; align-items: flex-start; }
.app-logo { width: 14px; height: 14px; margin-left: 0; }
.app-title { margin-left: 6px; line-height: 15px; font-size: 12px; letter-spacing: .05px; color: #8c8c8c; white-space: nowrap; }
.winctl { margin-left: auto; display: flex; gap: 36px; padding-right: 20px; overflow: hidden; height: 10px; }
.win-ic { width: 10px; height: 10px; }
.menu { height: 17px; display: flex; gap: 13px; padding-left: 4px; color: #555; font: 12px/17px "Liberation Sans", sans-serif; }

/* top toolbar */
.toolbar { height: 30px; flex: none; background: #141414; display: flex; align-items: center; padding: 0 10px 0 5px; }
.tb-left { width: 905px; display: flex; gap: 5px; }
.tb-play { display: flex; gap: 1px; }
.tb-right { margin-left: auto; display: flex; gap: 6px; }
.tbtn { height: 18px; background: #2b2b2b; border-radius: 2px; display: flex; align-items: center; justify-content: center; color: #a0a0a0; }
.tbtn.acc { width: 55px; gap: 6px; }
.kr { font-family: "Noto Sans CJK KR", sans-serif; color: #8a8a8a; }
.w30 { width: 30px; }
.w78 { width: 78px; justify-content: space-between; padding: 0 6px 0 4px; color: #969696; }
.pbtn { width: 31px; height: 18px; background: #2b2b2b; display: flex; align-items: center; justify-content: center; }
.pbtn.on { background: #1e4a73; }
.ic10 { width: 10px; height: 12px; color: #a0a0a0; }
.ic12 { width: 12px; height: 12px; color: #a0a0a0; }
.ic14 { width: 14px; height: 14px; color: #a0a0a0; }
.ic16 { width: 16px; height: 16px; color: #8e8e8e; }
.ad { width: 0; height: 0; border-left: 4px solid transparent; border-right: 4px solid transparent; border-top: 5px solid #a8a8a8; flex: none; }
.ad.sm { border-left-width: 3px; border-right-width: 3px; }
.ad.dimad { border-top-color: #606060; }

/* panes */
.main { flex: 1; min-height: 0; display: flex; gap: 2px; background: #111; }
.col-left { width: 868px; display: flex; flex-direction: column; }
.col-hier { width: 259px; background: #2b2b2b; }
.col-proj { width: 337px; background: #2b2b2b; }
.col-insp { width: 447px; background: #2c2c2c; display: flex; flex-direction: column; }
.tabbar { height: 20px; flex: none; background: #202020; display: flex; align-items: center; justify-content: flex-start; }
.tab { height: 20px; background: #2c2c2c; display: flex; align-items: center; border-radius: 2px 2px 0 0; color: #a0a0a0; padding: 1px 0 0 4px; gap: 5px; }
.tabic { width: 11px; }
.tab-scene { width: 73px; }
.tab-game { width: 51px; padding-left: 3px; gap: 5px; }
.tab-game .tabic { width: 12px; }
.tab-hier { width: 96px; border-top: 1px solid #2c5d87; padding-left: 9px; padding-top: 0; gap: 4px; }
.tab-proj { width: 81px; padding-left: 8px; gap: 5px; }
.tab-insp { width: 93px; padding-left: 9px; gap: 5px; }
.tdots { width: 4px; height: 14px; margin-left: auto; margin-right: 11px; color: #a0a0a0; }
.tlock { width: 10px; height: 12px; margin-left: auto; margin-right: 10px; color: #a0a0a0; }
.tlock + .tdots { margin-left: 0; }

/* scene */
.pane-scene { height: 484px; display: flex; flex-direction: column; }
.scene-tools { height: 25px; flex: none; background: #303030; border-bottom: 1px solid #6a6a6a; display: flex; align-items: center; padding: 0 4px 1px 3px; gap: 4px; color: #8e8e8e; }
.grip { width: 4px; height: 18px; border-left: 1px solid #4c4c4c; border-right: 1px solid #4c4c4c; margin-right: 3px; }
.grip.g2 { margin: 0 3px 0 5px; }
.grip.g3 { margin: 0 5px 0 0; }
.spacer { flex: 1; }
.stb { height: 20px; background: #3c3c3c; border-radius: 2px; display: flex; align-items: center; padding-left: 4px; gap: 1px; flex: none; }
.stb .ad { margin-left: auto; margin-right: 5px; }
.stb.blue { background: #36506f; color: #d0d0d0; }
.stb.blue svg { color: #d8d8d8; }
.w75 { width: 75px; } .w67 { width: 67px; } .w22 { width: 22px; } .w14 { width: 14px; padding: 0; }
.w36 { width: 36px; } .w31 { width: 31px; } .w32 { width: 32px; }
.stb.join { margin-left: -3px; justify-content: center; }
.stb.join .ad { margin: 0 auto; }
.stb.ctr { justify-content: center; padding: 0; }
.strong { font-weight: 600; }
.dim { color: #6c6c6c; }

.scene-view { flex: 1; position: relative; overflow: hidden; background-color: #484848;
  background-image: linear-gradient(90deg, #4e4e4e 1px, transparent 1px), linear-gradient(#505050 1px, transparent 1px);
  background-size: 21.950px 21.950px; background-position: 15.500px 0, 0 21.400px; }
.mark { position: absolute; background: #6d6d6d; }
.v-a { left: 213px; top: 0; bottom: 0; width: 1px; }
.v-b { left: 433px; top: 219px; bottom: 0; width: 1px; }
.v-c { left: 652px; top: 0; bottom: 0; width: 1px; }
.h-a { left: 0; top: 219px; width: 433px; height: 1px; }
.wline { position: absolute; background: #e0e0e0; }
.v-w { left: 432px; top: 0; width: 1px; height: 220px; }
.h-w { left: 433px; right: 0; top: 219px; height: 1px; }
.canvas-rect { position: absolute; left: 365px; top: 109px; width: 135px; height: 221px; border: 1px solid #d8d8d8; }
.cam { position: absolute; left: 424px; top: 213px; width: 18px; height: 14px; }
.palette { position: absolute; left: 0; top: 2px; width: 37px; height: 147px; background: #0e0e0e; border-radius: 0 3px 3px 0; display: flex; flex-direction: column; gap: 1px; padding: 0 3px 0 2px; }
.pal-head { height: 17px; display: flex; align-items: center; justify-content: center; }
.pal-head span { width: 16px; height: 4px; border-top: 1px solid #666; border-bottom: 1px solid #666; }
.pal-b { height: 20px; background: #383838; display: flex; align-items: center; justify-content: center; }
.pal-b.on { background: #36506f; }
.pal-b .br, .pal-b.on svg { color: #c8c8c8; }

/* game */
.pane-game { flex: 1; display: flex; flex-direction: column; margin-top: 1px; }
.game-tools { height: 21px; flex: none; background: #2f2f2f; display: flex; border-bottom: 1px solid #1c1c1c; color: #8e8e8e; }
.gt { display: flex; align-items: center; border-right: 1px solid #222; flex: none; white-space: nowrap; overflow: hidden; padding-left: 1px; }
.gt .ad { margin-left: auto; margin-right: 5px; }
.gt.ctr { justify-content: center; padding: 0; }
.gt.ctr .ad { margin: 0; }
.s88 { width: 88px; } .s85 { width: 87px; } .s161 { width: 159px; padding-left: 3px; } .s239 { width: 239px; padding: 0 7px 0 6px; }
.s110 { width: 110px; padding-left: 4px; } .s25 { width: 25px; } .s27 { width: 27px; } .s40 { width: 40px; } .s52 { width: 52px; } .s16 { width: 16px; border: 0; }
.pl { padding-left: 9px; }
.off { color: #5e5e5e; }
.slider { flex: 1; height: 2px; background: #555; margin: 0 7px 0 8px; position: relative; }
.slider i { position: absolute; left: 0; top: -4px; width: 10px; height: 10px; border-radius: 50%; background: #8a8a8a; }
.game-view { flex: 1; background: #282828; display: flex; justify-content: center; padding-right: 3px; }
.phone { width: 255px; background: #234e3a; display: flex; justify-content: center; padding-top: 64px; }
.timer { font: 700 23px/30px "Liberation Sans", sans-serif; color: #fff; }

/* hierarchy / project */
.pane-tools { height: 20px; border-bottom: 1px solid #1e1e1e; display: flex; align-items: center; position: relative; padding-left: 7px; background: #2c2c2c; }
.plus { width: 13px; height: 13px; flex: none; margin-right: 4px; background: linear-gradient(#b4b4b4,#b4b4b4) center/13px 2px no-repeat, linear-gradient(#b4b4b4,#b4b4b4) center/2px 13px no-repeat; }
.search { height: 16px; background: #1f1f1f; border: 1px solid #171717; border-radius: 8px 3px 3px 8px; display: flex; align-items: center; padding-left: 6px; gap: 3px; color: #6a6a6a; }
.search .ic10 { width: 9px; height: 9px; color: #9a9a9a; }
.s-hier { width: 212px; margin-left: 11px; }
.s-proj { width: 172px; margin-left: 13px; }
.pop { margin-left: auto; width: 17px; height: 14px; background: #2e2e2e; display: flex; align-items: center; justify-content: center; border-left: 1px solid #171717; }
.proj-tools { padding-right: 0; }
.pt-b { width: 26px; height: 20px; border-left: 1px solid #1e1e1e; display: flex; align-items: center; justify-content: center; gap: 1px; color: #a0a0a0; }
.s-proj + .pt-b { margin-left: 3px; }
.pt-b.last { width: 39px; }
.node { height: 16px; display: flex; align-items: center; white-space: nowrap; color: #a2a2a2; }
.node b { color: #b0b0b0; }
.ar { width: 0; height: 0; flex: none; margin-right: 3px; border-left: 5px solid transparent; border-right: 5px solid transparent; border-top: 8px solid #5e5e5e; }
.ar.none { border-color: transparent; }
.ar.r { border-top: 5px solid transparent; border-bottom: 5px solid transparent; border-left: 8px solid #5e5e5e; border-right: 0; margin-right: 5px; }
.nic { margin-right: 3px; color: #a4a4a4; }
.hier { background: linear-gradient(90deg, #282828 32px, #2c2c2c 32px); height: 100%; }
.hier .l0 { padding-left: 34px; } .hier .l1 { padding-left: 47px; } .hier .l2 { padding-left: 61px; }
.hier .ar { margin-right: 4px; }
.hier .nic { margin-right: 3px; }
.hier .head { background: #303030; }
.rowdots { margin-right: 9px; }
.sel { background: linear-gradient(90deg, #26456a 32px, #1d4a75 32px); color: #5d7c98; }
.sel .nic { color: #5d8099; }
.proj { padding-top: 4px; }
.proj .l0 { padding-left: 5px; } .proj .l1 { padding-left: 19px; } .proj .l2 { padding-left: 32px; }

/* inspector */
.insp-scroll { flex: 1; min-height: 0; display: flex; overflow: hidden; }
.insp-body { width: 435px; flex: none; }
.vscroll { flex: 1; background: #2c2c2c; border-left: 1px solid #262626; display: flex; flex-direction: column; align-items: center; padding-top: 4px; }
.sb-up { width: 0; height: 0; border-left: 4px solid transparent; border-right: 4px solid transparent; border-bottom: 4px solid #a8a8a8; }
.sb-down { width: 0; height: 0; border-left: 4px solid transparent; border-right: 4px solid transparent; border-top: 4px solid #a8a8a8; margin-top: 241px; }
.thumb { width: 10px; height: 636px; background: #4d4d4d; border-radius: 5px; margin-top: 6px; }
.obj-head { height: 58px; position: relative; padding: 8px 6px 0 47px; }
.obj-cube { position: absolute; left: 7px; top: 8px; width: 20px; height: 22px; color: #7f7f7f; }
.obj-ad { position: absolute; left: 26px; top: 30px; }
.obj-rows { display: flex; flex-direction: column; gap: 7px; }
.obj-r1 { display: flex; height: 17px; align-items: center; }
.obj-r1 .cb { margin: 0; }
.obj-r1 .name { flex: 0 0 286px; margin: 0 4px 0 6px; line-height: 17px; height: 17px; }
.static { margin-left: 4px; color: #8e8e8e; }
.obj-r1 .ad { margin-left: auto; margin-right: 6px; }
.obj-r2 { display: flex; height: 17px; align-items: center; margin-left: -7px; }
.tl { width: 27px; color: #8e8e8e; }
.tl2 { width: 37px; margin-left: 13px; }
.obj-r2 .dd { flex: none; margin: 0; }
.dd-tag { width: 161px; }
.dd-layer { width: 151px; }
.name { color: #b8b8b8; font-weight: 500; }

.fld { flex: 1; min-width: 0; height: 17px; margin-top: 1px; background: #202020; border: 1px solid #171717; border-radius: 3px; line-height: 15px; padding-left: 1px; color: #a8a8a8; display: block; }
.dd { flex: 1; height: 17px; margin-top: 1px; background: #414141; border-radius: 3px; line-height: 15px; padding: 0 5px 0 3px; color: #a8a8a8; display: flex; align-items: center; justify-content: space-between; }
.cb { flex: none; width: 14px; height: 14px; margin-top: 3px; background: #222; border: 1px solid #191919; border-radius: 2px; display: flex; align-items: center; justify-content: center; }
.cb svg { width: 12px; height: 12px; }
.comp { border-top: 1px solid #1a1a1a; }
.chead { height: 20px; background: #333; display: flex; align-items: center; padding: 2px 0 0 6px; border-bottom: 1px solid #292929; }
.chead b { margin-left: 6px; color: #a8a8a8; }
.chead .ar { margin-right: 6px; }
.cic { width: 12px; flex: none; color: #9e9e9e; }
.cic.eye { width: 16px; margin-left: -2px; margin-right: -2px; height: 12px; }
.cnb { width: 14px; flex: none; margin-left: 6px; }
.hcb { margin: 0 0 0 6px; }
.t-ic { height: 12px; background: #a6a6a6; color: #2c2c2c; font: 700 10px/12px Inter, sans-serif; text-align: center; }
.hic { color: #a8a8a8; }
.chead .hic { margin-left: 8px; }
.chead b + .hic { margin-left: auto; }
.chead .hd { margin-left: 12px; margin-right: 12px; }
.row { display: flex; height: 20px; padding: 0 6px 0 19px; }
.lbl { flex: 0 0 156px; line-height: 20px; white-space: nowrap; color: #929292; }
.lbl.ind { padding-left: 15px; }
.foldrow { padding-left: 8px; align-items: center; }
.foldrow .ar.r { margin-right: 3px; border-left-color: #5e5e5e; }
.rt-body { padding-top: 7px; height: 176px; }
.rt-top { height: 74px; display: flex; padding-top: 1px; }
.anchor { width: 172px; position: relative; }
.a-center { position: absolute; left: 28px; top: 0; font-size: 10px; line-height: 16px; color: #8a8a8a; }
.a-middle { position: absolute; left: 7px; top: 19px; height: 34px; writing-mode: vertical-rl; transform: rotate(180deg); font-size: 10px; line-height: 14px; text-align: center; color: #8a8a8a; }
.a-box { position: absolute; left: 27px; top: 21px; width: 35px; height: 35px; border: 1px solid #5c5c5c; }
.a-h { position: absolute; left: 0; right: 0; top: 16px; height: 1px; background: #8f3030; }
.a-v { position: absolute; top: 0; bottom: 0; left: 16px; width: 1px; background: #8f3030; }
.a-in { position: absolute; left: 8px; top: 8px; width: 17px; height: 17px; border: 1px solid #8a8a8a; }
.a-dot { position: absolute; left: 15px; top: 15px; width: 3px; height: 3px; background: #c08a10; }
.rt-grid { width: 257px; display: grid; grid-template-columns: 85px 85px 84px; column-gap: 2px; grid-template-rows: 18px 18px 17px 18px; line-height: 18px; color: #929292; }
.rt-grid > span:not(.fld) { padding-left: 1px; }
.rt-grid .fld { margin: 0; }
.rbtns { display: flex; justify-content: flex-end; margin-top: -1px; }
.rb { width: 25px; height: 18px; background: #4a4a4a; border-radius: 2px; display: flex; align-items: center; justify-content: center; color: #6c6c6c; font-size: 10px; border-left: 1px solid #2c2c2c; }
.dash { width: 10px; height: 10px; border: 1px dashed #6c6c6c; }
.rtr { padding-right: 5px; }
.rtl { flex: 0 0 153px; position: relative; }
.rot { margin-top: 8px; }
.tri { width: 257px; display: grid; grid-template-columns: 85px 85px 84px; column-gap: 2px; }
.ax { display: flex; }
.ax em { flex: 0 0 18px; line-height: 20px; text-align: center; color: #929292; }
.ax.pv em { flex-basis: 12px; }
.lk .link { position: absolute; right: 6px; top: 5px; height: 9px; }
.cbody { padding: 5px 0 7px; }
.tbody { padding-top: 6px; }
.tlabel { height: 17px; line-height: 17px; padding-left: 19px; color: #929292; }
.tarea { height: 47px; margin: 0 6px 3px 19px; background: #202020; border: 1px solid #171717; border-radius: 3px; padding: 1px 2px; color: #a8a8a8; }
.group { line-height: 20px; color: #929292; }
.group b { color: #999; }
.short { height: 18px; }
.mask { margin-top: 2px; }
.obj, .color { flex: 1; height: 18px; background: #202020; border: 1px solid #171717; border-radius: 3px; display: flex; align-items: center; padding-left: 2px; line-height: 15px; overflow: hidden; color: #a8a8a8; }
.color { padding: 0; border-color: #1c1c1c; background: #2b2b2b; }
.obt { margin-left: auto; width: 18px; flex: none; align-self: stretch; background: #2c2c2c; display: flex; align-items: center; justify-content: center; padding-left: 2px; }
.aa { font-size: 8px; font-weight: 700; width: 11px; margin: 0 0 0 1px; color: #9a9a9a; }
.tmini { width: 10px; height: 10px; margin: 0 2px 0 2px; background: #a6a6a6; color: #222; font: 700 8px/10px Inter, sans-serif; text-align: center; flex: none; }
.sw { flex: 1; height: 100%; border-bottom: 3px solid #fff; }
.c-red { background: #ff5a45; }
.c-white { background: #fff; }
.c-hi { background: #f5f5f5; }
.c-pr { background: #c8c8c8; }
.seg { display: flex; margin-top: 1px; height: 17px; width: 58px; flex: none; }
.seg2 { margin-left: 12px; }
.seg > span { flex: 1; background: #414141; display: flex; align-items: center; justify-content: center; border-right: 1px solid #2c2c2c; }
.seg > span.on { background: #36506f; }
.seg svg { color: #a0a0a0; }
.seg .on svg { color: #d8d8d8; }
.seg .up svg { margin-top: -3px; }
.seg .down svg { margin-top: 3px; }
.events { height: 21px; flex: none; background: #2c2c2c; border-top: 1px solid #1c1c1c; display: flex; align-items: center; padding-left: 4px; }
.ev-name { width: 131px; height: 100%; display: flex; align-items: center; gap: 4px; padding-left: 4px; font-weight: 600; color: #a0a0a0; border-right: 1px solid #1c1c1c; border-left: 1px solid #1c1c1c; white-space: nowrap; }
.ev-lines { margin-left: 4px; width: 289px; height: 4px; border-top: 1px solid #4a4a4a; border-bottom: 1px solid #4a4a4a; }
.events .tdots { margin-right: 6px; }

.status { height: 21px; flex: none; background: #141414; display: flex; justify-content: flex-end; align-items: center; padding-right: 1px; }
.status span { width: 26px; height: 21px; display: flex; align-items: center; justify-content: center; border-left: 1px solid #222; }
```
